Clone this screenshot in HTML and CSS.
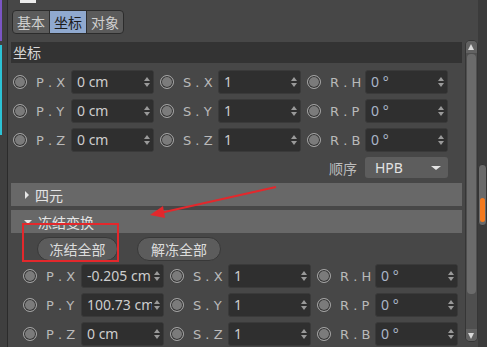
FILE: index.html
```html
<!DOCTYPE html>
<html lang="zh-CN">
<head>
  <meta charset="UTF-8">
  <title>坐标</title>
  <link rel="stylesheet" href="styles.css">
</head>
<body>
<div class="app">
  <!-- 左侧边缘 -->
  <div class="edge">
    <span class="edge-purple"></span>
    <span class="edge-cyan"></span>
  </div>

  <!-- 属性面板 -->
  <div class="panel">
    <div class="top-icon"></div>

    <div class="tabs">
      <span class="tab">基本</span>
      <span class="tab active">坐标</span>
      <span class="tab">对象</span>
    </div>

    <div class="group-head">坐标</div>

    <div class="grid">
      <div class="field"><i class="radio"></i><span class="label">P . X</span><span class="input">0 cm<b class="spin"></b></span></div>
      <div class="field"><i class="radio"></i><span class="label">S . X</span><span class="input">1<b class="spin"></b></span></div>
      <div class="field"><i class="radio"></i><span class="label">R . H</span><span class="input deg">0 °<b class="spin"></b></span></div>

      <div class="field"><i class="radio"></i><span class="label">P . Y</span><span class="input">0 cm<b class="spin"></b></span></div>
      <div class="field"><i class="radio"></i><span class="label">S . Y</span><span class="input">1<b class="spin"></b></span></div>
      <div class="field"><i class="radio"></i><span class="label">R . P</span><span class="input deg">0 °<b class="spin"></b></span></div>

      <div class="field"><i class="radio"></i><span class="label">P . Z</span><span class="input">0 cm<b class="spin"></b></span></div>
      <div class="field"><i class="radio"></i><span class="label">S . Z</span><span class="input">1<b class="spin"></b></span></div>
      <div class="field"><i class="radio"></i><span class="label">R . B</span><span class="input deg">0 °<b class="spin"></b></span></div>

      <div class="field order"><span class="order-label">顺序</span><span class="select">HPB<b class="caret"></b></span></div>
    </div>

    <div class="bar"><i class="tri-right"></i>四元</div>
    <div class="bar"><i class="tri-down"></i>冻结变换</div>

    <div class="buttons">
      <span class="btn">冻结全部</span>
      <span class="btn wide">解冻全部</span>
    </div>

    <div class="grid sub">
      <div class="field"><i class="radio"></i><span class="label">P . X</span><span class="input">-0.205 cm<b class="spin"></b></span></div>
      <div class="field"><i class="radio"></i><span class="label">S . X</span><span class="input">1<b class="spin"></b></span></div>
      <div class="field"><i class="radio"></i><span class="label">R . H</span><span class="input deg">0 °<b class="spin"></b></span></div>

      <div class="field"><i class="radio"></i><span class="label">P . Y</span><span class="input">100.73 cm<b class="spin"></b></span></div>
      <div class="field"><i class="radio"></i><span class="label">S . Y</span><span class="input">1<b class="spin"></b></span></div>
      <div class="field"><i class="radio"></i><span class="label">R . P</span><span class="input deg">0 °<b class="spin"></b></span></div>

      <div class="field"><i class="radio"></i><span class="label">P . Z</span><span class="input">0 cm<b class="spin"></b></span></div>
      <div class="field"><i class="radio"></i><span class="label">S . Z</span><span class="input">1<b class="spin"></b></span></div>
      <div class="field"><i class="radio"></i><span class="label">R . B</span><span class="input deg">0 °<b class="spin"></b></span></div>
    </div>

    <!-- 标注：红框和箭头 -->
    <div class="mark"></div>
    <svg class="arrow" width="140" height="40" viewBox="0 0 140 40">
      <line x1="132" y1="2" x2="16" y2="28" stroke="#e3282c" stroke-width="2"/>
      <polygon points="6,30 19,21 21,33" fill="#e3282c"/>
    </svg>
  </div>

  <!-- 滚动条 -->
  <div class="scroll">
    <span class="scroll-up"></span>
    <span class="scroll-thumb"></span>
    <span class="scroll-track"></span>
    <span class="scroll-down"></span>
  </div>
  <div class="outer">
    <span class="outer-thumb"><span class="outer-hot"></span></span>
  </div>
</div>
</body>
</html>
```

FILE: styles.css
```css
body {
  margin: 0;
  background: #474747;
  font-family: "Noto Sans CJK SC", sans-serif;
  font-size: 14px;
  color: #d4d4d4;
}

.app {
  display: flex;
  width: 487px;
  height: 347px;
  overflow: hidden;
}

/* 左侧边缘 */
.edge {
  width: 7px;
  border-right: 1px solid #2b2b2b;
  background: #3f3f3f;
  display: flex;
  flex-direction: column;
}
.edge-purple {
  width: 2px;
  height: 41px;
  background: #7b55c4;
}
.edge-cyan {
  width: 2px;
  height: 90px;
  margin-top: 4px;
  background: #2cc3d6;
}

/* 面板 */
.panel {
  position: relative;
  width: 452px;
  padding: 0 3px;
  display: flex;
  flex-direction: column;
}

.top-icon {
  width: 16px;
  height: 3px;
  margin-left: 9px;
  background: #ececec;
}

/* 标签页 */
.tabs {
  display: flex;
  align-self: flex-start;
  margin: 7px 0 0 1px;
  height: 22px;
  border: 1px solid #2c2c2c;
  border-radius: 4px;
  background: #5b5b5b;
  overflow: hidden;
}
.tab {
  width: 36px;
  line-height: 22px;
  text-align: center;
  color: #cfcfcf;
  border-left: 1px solid #2f2f2f;
}
.tab:first-child {
  border-left: none;
}
.tab.active {
  background: #90a9cf;
  color: #1c1c1c;
}

.group-head {
  margin-top: 8px;
  height: 21px;
  line-height: 21px;
  padding-left: 2px;
  background: #333333;
  color: #d8d8d8;
}

/* 坐标网格 */
.grid {
  display: grid;
  grid-template-columns: repeat(3, 141px);
  column-gap: 6px;
  row-gap: 5px;
  margin: 7px 0 0 2px;
}
.grid.sub {
  margin: 3px 0 0 12px;
}

.field {
  display: flex;
  align-items: center;
  height: 24px;
}

.radio {
  width: 12px;
  height: 12px;
  border: 1px solid #a3a3a3;
  border-radius: 50%;
  background: #7b7b7b;
  box-shadow: inset 0 0 0 1px #2f2f2f;
}

.label {
  width: 35px;
  padding-left: 9px;
  font-family: "DejaVu Sans", sans-serif;
  font-size: 13px;
  color: #b9b9b9;
  white-space: pre;
}

.input {
  position: relative;
  width: 76px;
  height: 22px;
  line-height: 22px;
  padding-left: 5px;
  border: 1px solid #3a3a3a;
  border-radius: 3px;
  background: #2f2f2f;
  font-family: "Noto Sans", sans-serif;
  font-size: 14px;
  color: #cdcdcd;
  white-space: nowrap;
  overflow: hidden;
}
.input.deg {
  color: #aab6c8;
}

/* 上下微调箭头 */
.spin {
  position: absolute;
  right: 0;
  top: 0;
  width: 11px;
  height: 22px;
  background: #2f2f2f;
}
.spin::before,
.spin::after {
  content: "";
  position: absolute;
  left: 2px;
  border-left: 3px solid transparent;
  border-right: 3px solid transparent;
}
.spin::before {
  top: 6px;
  border-bottom: 4px solid #9a9a9a;
}
.spin::after {
  top: 12px;
  border-top: 4px solid #9a9a9a;
}

.field.order {
  grid-column: 3;
  height: 21px;
}
.order-label {
  width: 50px;
  padding-right: 8px;
  text-align: right;
  color: #bdbdbd;
}
.select {
  position: relative;
  width: 73px;
  height: 21px;
  line-height: 21px;
  padding-left: 10px;
  border-radius: 3px;
  background: #5d5d5d;
  font-family: "Noto Sans", sans-serif;
  color: #e2e2e2;
}
.caret {
  position: absolute;
  right: 7px;
  top: 9px;
  border-left: 5px solid transparent;
  border-right: 5px solid transparent;
  border-top: 4px solid #e4e4e4;
}

/* 折叠栏 */
.bar {
  display: flex;
  align-items: center;
  margin-top: 4px;
  height: 23px;
  background: #686868;
  color: #e4e4e4;
}
.grid + .bar {
  margin-top: 5px;
}
.tri-right {
  margin: 0 6px 0 14px;
  border-top: 4px solid transparent;
  border-bottom: 4px solid transparent;
  border-left: 4px solid #e6e6e6;
}
.tri-down {
  margin: 0 6px 0 13px;
  border-left: 4px solid transparent;
  border-right: 4px solid transparent;
  border-top: 4px solid #e6e6e6;
}

/* 按钮 */
.buttons {
  display: flex;
  gap: 19px;
  margin: 4px 0 0 26px;
}
.btn {
  width: 79px;
  height: 22px;
  line-height: 22px;
  text-align: center;
  border: 1px solid #383838;
  border-radius: 12px;
  background: #5c5c5c;
  color: #dcdcdc;
}
.btn.wide {
  width: 82px;
}

/* 标注 */
.mark {
  position: absolute;
  left: 14px;
  top: 223px;
  width: 93px;
  height: 35px;
  border: 2px solid #e3282c;
}
.arrow {
  position: absolute;
  left: 136px;
  top: 185px;
}

/* 滚动条 */
.scroll {
  width: 11px;
  margin-top: 40px;
  height: 300px;
  display: flex;
  flex-direction: column;
  border: 1px solid #363636;
  border-radius: 5px;
  background: #4f4f4f;
  overflow: hidden;
}
.scroll-up,
.scroll-down {
  height: 12px;
  background: #626262;
  position: relative;
}
.scroll-up::after,
.scroll-down::after {
  content: "";
  position: absolute;
  left: 2px;
  border-left: 3px solid transparent;
  border-right: 3px solid transparent;
}
.scroll-up::after {
  top: 3px;
  border-bottom: 6px solid #dadada;
}
.scroll-down::after {
  top: 4px;
  border-top: 6px solid #dadada;
}
.scroll-thumb {
  height: 240px;
  margin: 1px 1px 0;
  border-radius: 4px;
  background: #6b6b6b;
}
.scroll-track {
  flex: 1;
}

.outer {
  width: 9px;
  background: #3b3b3b;
  padding-top: 164px;
}
.outer-thumb {
  display: flex;
  flex-direction: column;
  justify-content: flex-end;
  width: 7px;
  height: 60px;
  border: 1px solid #343434;
  border-radius: 4px;
  background: #6a6a6a;
  overflow: hidden;
}
.outer-hot {
  height: 24px;
  margin: 0 1px 3px;
  border-radius: 3px;
  background: #f47a1f;
}
```
